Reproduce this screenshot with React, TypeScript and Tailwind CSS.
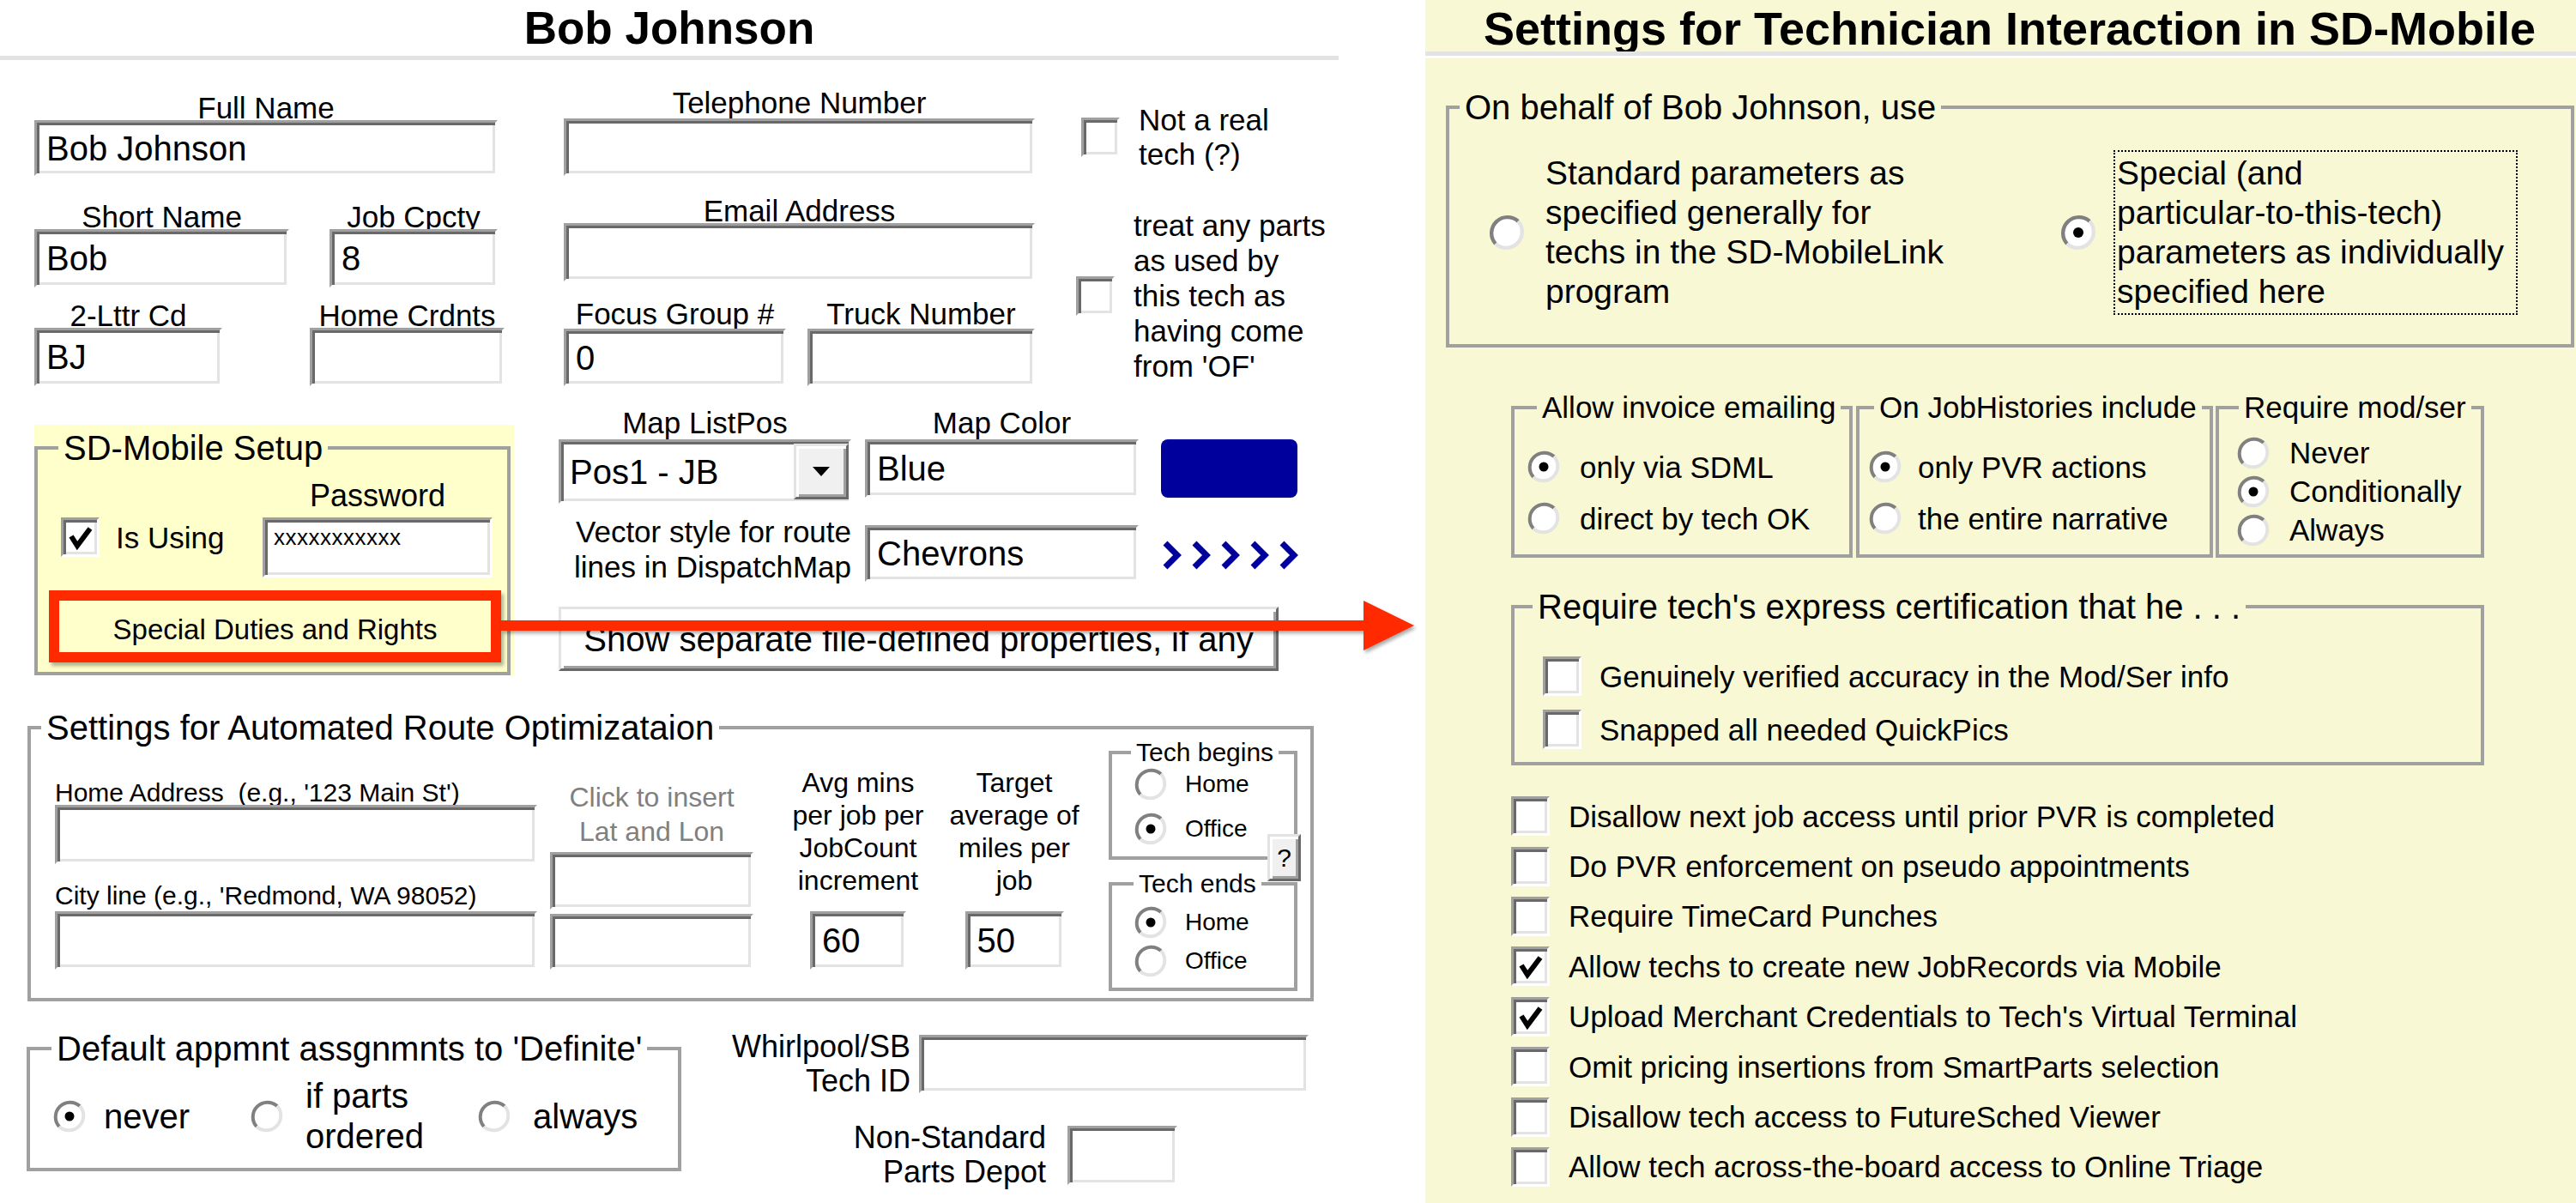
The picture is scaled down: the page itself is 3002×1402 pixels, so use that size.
import React from "react";

// Windows-style 3D edges
const sunken =
  "bg-white border-[3px] border-t-[#a0a0a0] border-l-[#a0a0a0] border-b-white border-r-white shadow-[inset_3px_3px_0_#696969,inset_-3px_-3px_0_#e3e3e3]";
const raised =
  "border-[3px] border-t-[#e3e3e3] border-l-[#e3e3e3] border-b-[#696969] border-r-[#696969] shadow-[inset_3px_3px_0_#fff,inset_-3px_-3px_0_#a0a0a0]";

function TextBox({ size, value }: { size: string; value?: string }) {
  return (
    <div
      className={`${sunken} ${size} flex items-center pl-[11px] text-[40px] leading-none whitespace-nowrap overflow-hidden`}
    >
      {value}
    </div>
  );
}

function Stack({
  label,
  w,
  lh,
  box,
  value,
}: {
  label: string;
  w: string;
  lh: string;
  box: string;
  value?: string;
}) {
  return (
    <div className={`flex flex-col ${w}`}>
      <div className={`${lh} text-center text-[35px] leading-[35px] whitespace-nowrap`}>{label}</div>
      <TextBox size={`${w} ${box}`} value={value} />
    </div>
  );
}

function Check({ on }: { on?: boolean }) {
  return (
    <div className={`${sunken} w-[45px] h-[46px] shrink-0 flex items-center justify-center`}>
      {on && (
        <svg width="30" height="30" viewBox="0 0 30 30">
          <path d="M4 14 L11 25 L26 5" fill="none" stroke="#000" strokeWidth="6" />
        </svg>
      )}
    </div>
  );
}

function Radio({ on, cls = "w-[40px] h-[42px]" }: { on?: boolean; cls?: string }) {
  return (
    <svg className={`shrink-0 ${cls}`} viewBox="0 0 40 42">
      <circle cx="20" cy="21" r="17" fill="#fff" />
      <path d="M8 33 A17 17 0 0 1 32 9" fill="none" stroke="#808080" strokeWidth="4" />
      <path d="M32 9 A17 17 0 0 1 8 33" fill="none" stroke="#e3e3e3" strokeWidth="4" />
      {on && <circle cx="20" cy="21" r="5.5" fill="#000" />}
    </svg>
  );
}

function Opt({ on, label, h = "h-[46px]", gap = "gap-[22px]" }: { on?: boolean; label: string; h?: string; gap?: string }) {
  return (
    <div className={`${h} ${gap} flex items-center`}>
      <Radio on={on} cls="w-[40px] h-[44px]" />
      <span className="text-[35px] leading-none whitespace-nowrap">{label}</span>
    </div>
  );
}

const rightChecks: [string, boolean][] = [
  ["Disallow next job access until prior PVR is completed", false],
  ["Do PVR enforcement on pseudo appointments", false],
  ["Require TimeCard Punches", false],
  ["Allow techs to create new JobRecords via Mobile", true],
  ["Upload Merchant Credentials to Tech's Virtual Terminal", true],
  ["Omit pricing insertions from SmartParts selection", false],
  ["Disallow tech access to FutureSched Viewer", false],
  ["Allow tech across-the-board access to Online Triage", false],
];

export default function App() {
  return (
    <div className="relative w-[3002px] h-[1402px] flex bg-white text-black font-['Liberation_Sans',Arial,sans-serif] overflow-hidden">
      {/* Left: technician record */}
      <div className="w-[1560px] shrink-0 flex flex-col">
        <div className="h-[65px] pt-[6px] text-center text-[53px] leading-[53px] font-bold">Bob Johnson</div>
        <div className="h-[5px] bg-[#e3e3e3]" />

        {/* Basic fields */}
        <div className="flex h-[380px]">
          <div className="ml-[40px] w-[548px] flex flex-col">
            <div className="mt-[38px]">
              <Stack label="Full Name" w="w-[540px]" lh="h-[32px]" box="h-[65px]" value="Bob Johnson" />
            </div>
            <div className="mt-[30px] flex gap-[47px]">
              <Stack label="Short Name" w="w-[297px]" lh="h-[32px]" box="h-[68px]" value="Bob" />
              <Stack label="Job Cpcty" w="w-[196px]" lh="h-[32px]" box="h-[68px]" value="8" />
            </div>
            <div className="mt-[15px] flex gap-[102px]">
              <Stack label="2-Lttr Cd" w="w-[219px]" lh="h-[32px]" box="h-[68px]" value="BJ" />
              <Stack label="Home Crdnts" w="w-[227px]" lh="h-[32px]" box="h-[68px]" />
            </div>
          </div>

          <div className="ml-[69px] w-[549px] flex flex-col">
            <div className="mt-[32px]">
              <Stack label="Telephone Number" w="w-[549px]" lh="h-[36px]" box="h-[67px]" />
            </div>
            <div className="mt-[23px]">
              <Stack label="Email Address" w="w-[549px]" lh="h-[32px]" box="h-[68px]" />
            </div>
            <div className="mt-[20px] flex gap-[25px]">
              <Stack label="Focus Group #" w="w-[259px]" lh="h-[35px]" box="h-[67px]" value="0" />
              <Stack label="Truck Number" w="w-[265px]" lh="h-[35px]" box="h-[67px]" />
            </div>
          </div>

          <div className="ml-[48px] flex flex-col">
            <div className="mt-[50px] ml-[6px] flex items-center gap-[22px]">
              <Check />
              <div className="text-[35px] leading-[40px] whitespace-nowrap">
                Not a real
                <br />
                tech (?)
              </div>
            </div>
            <div className="mt-[42px] flex items-center gap-[22px]">
              <Check />
              <div className="text-[35px] leading-[41px] whitespace-nowrap">
                treat any parts
                <br />
                as used by
                <br />
                this tech as
                <br />
                having come
                <br />
                from 'OF'
              </div>
            </div>
          </div>
        </div>

        {/* SD-Mobile + map settings */}
        <div className="flex h-[337px]">
          <div className="ml-[40px] mt-[45px] w-[559px] self-start bg-[#ffffcc] pt-[7px]">
            <fieldset className="w-[555px] border-[4px] border-[#a0a0a0]">
              <legend className="ml-[24px] px-[6px] text-[40px] leading-[40px] whitespace-nowrap">SD-Mobile Setup</legend>
              <div className="pl-[13px] pb-[11px]">
                <div className="mt-[18px] pr-[17px] flex justify-between">
                  <div className="mt-[43px] ml-[14px] h-[46px] flex items-center gap-[19px]">
                    <Check on />
                    <span className="text-[35px] leading-none">Is Using</span>
                  </div>
                  <div className="flex flex-col w-[268px]">
                    <div className="h-[43px] text-center text-[36px] leading-[36px]">Password</div>
                    <div className={`${sunken} h-[70px] pl-[10px] pt-[8px] text-[26px] leading-[25px] tracking-[0.5px]`}>
                      xxxxxxxxxxx
                    </div>
                  </div>
                </div>
                <div className="mt-[15px] w-[527px] h-[84px] border-[12px] border-[#ff2a00] bg-[#ffffcc] pt-[6px] flex items-center justify-center text-[33px] leading-none whitespace-nowrap shadow-[3px_4px_4px_rgba(0,0,0,0.3)]">
                  Special Duties and Rights
                </div>
              </div>
            </fieldset>
          </div>

          <div className="ml-[52px] flex flex-col">
            <div className="mt-[25px] flex items-start">
              <div className="flex flex-col w-[341px]">
                <div className="h-[37px] text-center text-[35px] leading-[35px]">Map ListPos</div>
                <div className={`${sunken} h-[75px] flex items-center`}>
                  <span className="flex-1 pl-[10px] text-[40px] leading-none whitespace-nowrap">Pos1 - JB</span>
                  <div className={`${raised} w-[64px] h-[65px] bg-[#f0f0f0] flex items-center justify-center`}>
                    <svg width="20" height="11" viewBox="0 0 20 11">
                      <polygon points="0,0 20,0 10,11" fill="#000" />
                    </svg>
                  </div>
                </div>
              </div>
              <div className="ml-[16px] flex flex-col w-[319px]">
                <div className="h-[37px] text-center text-[35px] leading-[35px]">Map Color</div>
                <TextBox size="w-[319px] h-[68px]" value="Blue" />
              </div>
              <div className="ml-[26px] mt-[37px] w-[159px] h-[68px] rounded-[8px] bg-[#00009c]" />
            </div>

            <div className="mt-[12px] flex items-start">
              <div className="w-[341px] text-right text-[35px] leading-[41px] whitespace-nowrap">
                Vector style for route
                <br />
                lines in DispatchMap
              </div>
              <div className="ml-[16px] mt-[13px]">
                <TextBox size="w-[319px] h-[66px]" value="Chevrons" />
              </div>
              <svg className="ml-[26px] mt-[31px] w-[166px] h-[34px]" viewBox="0 0 166 34">
                {[0, 1, 2, 3, 4].map((i) => (
                  <path
                    key={i}
                    d={`M${5 + i * 34} 3 L${19 + i * 34} 17 L${5 + i * 34} 31`}
                    fill="none"
                    stroke="#00009c"
                    strokeWidth="7"
                  />
                ))}
              </svg>
            </div>

            <div
              className={`mt-[26px] w-[839px] h-[75px] ${raised} bg-white flex items-center justify-center text-[40px] leading-none whitespace-nowrap`}
            >
              Show separate file-defined properties, if any
            </div>
          </div>
        </div>

        {/* Route optimization */}
        <div className="ml-[32px] mt-[41px] w-[1499px]">
          <fieldset className="border-[4px] border-[#a0a0a0]">
            <legend className="ml-[12px] px-[6px] text-[40px] leading-[40px] whitespace-nowrap">
              Settings for Automated Route Optimizataion
            </legend>
            <div className="flex items-start pl-[28px] pb-[8px]">
              <div className="w-[562px] mt-[41px] flex flex-col">
                <div className="h-[29px] text-[30px] leading-[30px] whitespace-pre">Home Address  (e.g., '123 Main St')</div>
                <TextBox size="w-[562px] h-[69px]" />
                <div className="mt-[22px] h-[33px] text-[30px] leading-[30px] whitespace-pre">City line (e.g., 'Redmond, WA 98052)</div>
                <TextBox size="w-[562px] h-[68px]" />
              </div>

              <div className="ml-[15px] w-[237px] mt-[41px] flex flex-col">
                <div className="text-center text-[32px] leading-[40px] text-[#808080] whitespace-nowrap">
                  Click to insert
                  <br />
                  Lat and Lon
                </div>
                <div className="mt-[4px]">
                  <TextBox size="w-[237px] h-[67px]" />
                </div>
                <div className="mt-[5px]">
                  <TextBox size="w-[237px] h-[65px]" />
                </div>
              </div>

              <div className="ml-[44px] w-[156px] mt-[25px] flex flex-col items-center">
                <div className="text-center text-[32px] leading-[38px] whitespace-nowrap">
                  Avg mins
                  <br />
                  per job per
                  <br />
                  JobCount
                  <br />
                  increment
                </div>
                <div className="mt-[17px]">
                  <TextBox size="w-[112px] h-[68px]" value="60" />
                </div>
              </div>

              <div className="ml-[30px] w-[148px] mt-[25px] flex flex-col items-center">
                <div className="text-center text-[32px] leading-[38px] whitespace-nowrap">
                  Target
                  <br />
                  average of
                  <br />
                  miles per
                  <br />
                  job
                </div>
                <div className="mt-[17px]">
                  <TextBox size="w-[115px] h-[68px]" value="50" />
                </div>
              </div>

              <div className="relative ml-[36px] w-[220px] mt-[-6px] flex flex-col">
                <fieldset className="border-[4px] border-[#a0a0a0]">
                  <legend className="ml-[22px] px-[6px] text-[30px] leading-[30px] whitespace-nowrap">Tech begins</legend>
                  <div className="pt-[1px] pb-[11px] pl-[25px] flex flex-col gap-[10px]">
                    <div className="h-[42px] flex items-center gap-[20px]">
                      <Radio />
                      <span className="text-[28px] leading-none">Home</span>
                    </div>
                    <div className="h-[42px] flex items-center gap-[20px]">
                      <Radio on />
                      <span className="text-[28px] leading-none">Office</span>
                    </div>
                  </div>
                </fieldset>
                <fieldset className="mt-[13px] border-[4px] border-[#a0a0a0]">
                  <legend className="ml-[25px] px-[6px] text-[30px] leading-[30px] whitespace-nowrap">Tech ends</legend>
                  <div className="pt-[9px] pb-[10px] pl-[25px] flex flex-col gap-[3px]">
                    <div className="h-[42px] flex items-center gap-[20px]">
                      <Radio on />
                      <span className="text-[28px] leading-none">Home</span>
                    </div>
                    <div className="h-[42px] flex items-center gap-[20px]">
                      <Radio />
                      <span className="text-[28px] leading-none">Office</span>
                    </div>
                  </div>
                </fieldset>
                <div
                  className={`absolute left-[185px] top-[110px] w-[39px] h-[55px] ${raised} bg-[#f0f0f0] flex items-center justify-center text-[30px] leading-none`}
                >
                  ?
                </div>
              </div>
            </div>
          </fieldset>
        </div>

        {/* Bottom row */}
        <div className="flex items-start">
          <fieldset className="ml-[31px] mt-[35px] w-[763px] border-[4px] border-[#a0a0a0]">
            <legend className="ml-[25px] px-[6px] text-[40px] leading-[40px] whitespace-nowrap">
              Default appmnt assgnmnts to 'Definite'
            </legend>
            <div className="pt-[12px] pb-[13px] pl-[26px]">
              <div className="h-[94px] flex items-center">
                <div className="w-[230px] flex items-center gap-[20px]">
                  <Radio on />
                  <span className="text-[40px] leading-none">never</span>
                </div>
                <div className="w-[265px] flex items-center gap-[25px]">
                  <Radio />
                  <span className="text-[40px] leading-[47px] whitespace-nowrap">
                    if parts
                    <br />
                    ordered
                  </span>
                </div>
                <div className="flex items-center gap-[25px]">
                  <Radio />
                  <span className="text-[40px] leading-none">always</span>
                </div>
              </div>
            </div>
          </fieldset>

          <div className="ml-[40px] mt-[33px] flex flex-col">
            <div className="flex items-center">
              <div className="w-[227px] text-right text-[36px] leading-[40px] whitespace-nowrap">
                Whirlpool/SB
                <br />
                Tech ID
              </div>
              <div className="ml-[10px]">
                <TextBox size="w-[454px] h-[68px]" />
              </div>
            </div>
            <div className="mt-[26px] flex items-center">
              <div className="w-[385px] text-right text-[36px] leading-[40px] whitespace-nowrap">
                Non-Standard
                <br />
                Parts Depot
              </div>
              <div className="ml-[25px]">
                <TextBox size="w-[128px] h-[69px]" />
              </div>
            </div>
          </div>
        </div>
      </div>

      {/* Right: SD-Mobile interaction settings */}
      <div className="ml-[101px] w-[1341px] shrink-0 bg-[#f8f8d4] flex flex-col">
        <div className="h-[60px] pt-[6px] pl-[21px] text-center text-[54px] leading-[54px] font-bold whitespace-nowrap">
          Settings for Technician Interaction in SD-Mobile
        </div>
        <div className="h-[5px] bg-[#e3e3e3]" />
        <div className="h-[3px] bg-white" />

        <fieldset className="ml-[24px] mt-[37px] w-[1315px] border-[4px] border-[#a0a0a0]">
          <legend className="ml-[12px] px-[6px] text-[40px] leading-[40px] whitespace-nowrap">
            On behalf of Bob Johnson, use
          </legend>
          <div className="pt-[30px] pb-[34px] pl-[45px] flex items-center">
            <div className="w-[666px] flex items-center gap-[23px]">
              <Radio cls="w-[44px] h-[46px]" />
              <div className="text-[39px] leading-[46px] whitespace-nowrap">
                Standard parameters as
                <br />
                specified generally for
                <br />
                techs in the SD-MobileLink
                <br />
                program
              </div>
            </div>
            <Radio on cls="w-[44px] h-[46px]" />
            <div className="ml-[19px] w-[471px] h-[192px] border-2 border-dotted border-black pl-[2px] flex items-center text-[39px] leading-[46px] whitespace-nowrap">
              <div>
                Special (and
                <br />
                particular-to-this-tech)
                <br />
                parameters as individually
                <br />
                specified here
              </div>
            </div>
          </div>
        </fieldset>

        <div className="ml-[100px] mt-[52px] flex">
          <fieldset className="w-[398px] border-[4px] border-[#a0a0a0]">
            <legend className="ml-[26px] px-[6px] text-[35px] leading-[35px] whitespace-nowrap">Allow invoice emailing</legend>
            <div className="h-[154px] pt-[29px] pl-[14px] flex flex-col gap-[14px]">
              <Opt on label="only via SDML" />
              <Opt label="direct by tech OK" />
            </div>
          </fieldset>
          <fieldset className="ml-[4px] w-[416px] border-[4px] border-[#a0a0a0]">
            <legend className="ml-[17px] px-[6px] text-[35px] leading-[35px] whitespace-nowrap">On JobHistories include</legend>
            <div className="h-[154px] pt-[29px] pl-[10px] flex flex-col gap-[14px]">
              <Opt on label="only PVR actions" gap="gap-[18px]" />
              <Opt label="the entire narrative" gap="gap-[18px]" />
            </div>
          </fieldset>
          <fieldset className="ml-[3px] w-[313px] border-[4px] border-[#a0a0a0]">
            <legend className="ml-[23px] px-[6px] text-[35px] leading-[35px] whitespace-nowrap">Require mod/ser</legend>
            <div className="h-[154px] pt-[13px] pl-[20px] flex flex-col">
              <Opt label="Never" h="h-[45px]" />
              <Opt on label="Conditionally" h="h-[45px]" />
              <Opt label="Always" h="h-[45px]" />
            </div>
          </fieldset>
        </div>

        <fieldset className="ml-[100px] mt-[37px] w-[1134px] border-[4px] border-[#a0a0a0]">
          <legend className="ml-[21px] px-[6px] text-[40px] leading-[40px] whitespace-nowrap">
            Require tech's express certification that he . . .
          </legend>
          <div className="pt-[36px] pb-[13px] pl-[33px] flex flex-col gap-[12px]">
            <div className="h-[50px] flex items-center gap-[21px]">
              <Check />
              <span className="text-[35px] leading-none whitespace-nowrap">Genuinely verified accuracy in the Mod/Ser info</span>
            </div>
            <div className="h-[50px] flex items-center gap-[21px]">
              <Check />
              <span className="text-[35px] leading-none whitespace-nowrap">Snapped all needed QuickPics</span>
            </div>
          </div>
        </fieldset>

        <div className="ml-[100px] mt-[30px] flex flex-col">
          {rightChecks.map(([label, on]) => (
            <div key={label} className="h-[58.4px] flex items-center gap-[22px]">
              <Check on={on} />
              <span className="text-[35px] leading-none whitespace-nowrap">{label}</span>
            </div>
          ))}
        </div>
      </div>

      {/* Red callout arrow */}
      <svg
        className="absolute left-0 top-0 w-[3002px] h-[1402px] pointer-events-none drop-shadow-[2px_3px_2px_rgba(0,0,0,0.35)]"
        viewBox="0 0 3002 1402"
      >
        <rect x="584" y="723" width="1008" height="12" fill="#ff2a00" />
        <polygon points="1589,700 1648,729 1589,758" fill="#ff2a00" />
      </svg>
    </div>
  );
}
